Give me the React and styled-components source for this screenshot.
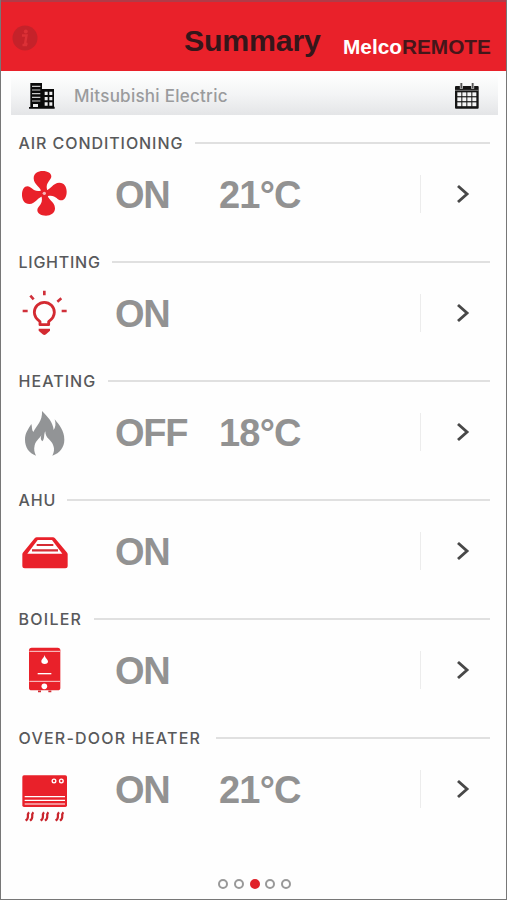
import React from 'react';
import styled, { createGlobalStyle } from 'styled-components';

const RED = '#e9212a';
const GREY = '#929292';

const FanIcon = () => (
	<Icon viewBox="0 0 150 168">
		{[0, 90, 180, 270].map((angle) => (
			<path
				key={angle}
				transform={`translate(73 82) rotate(${angle})`}
				fill={RED}
				d="M-10 0C-6-18-32-24-32-45C-32-60-19-67-5-67C11-67 21-60 21-51C21-38 3-34 8-11L9 0Z"
			/>
		))}
		<circle cx="73" cy="82" r="5" fill="#f7b5b8" />
	</Icon>
);

const BulbIcon = () => (
	<Icon viewBox="0 0 150 168">
		<path
			d="M60 119V110C50 103 43 95 43 82A30 30 0 0 1 103 82C103 95 96 103 86 110V119Z"
			fill="none"
			stroke="#d32a31"
			strokeWidth="8.5"
			strokeLinejoin="round"
		/>
		<path d="M56 131H90V137L78 148Q73 152 68 148L56 137Z" fill="#d32a31" />
		<path
			d="M73 17V31M31 32L41 43M112 50L124 40M8 78H23M125 78H140"
			stroke="#d0303a"
			strokeWidth="8"
		/>
	</Icon>
);

const FlameIcon = () => (
	<Icon viewBox="0 0 150 168">
		<path
			fill="#929496"
			d="M66 21C84 39 99 55 101 78C107 70 108 59 104 46C118 63 133 80 133 107C133 129 120 147 97 155C109 135 98 116 87 106C79 99 76 91 76 82C70 92 75 104 67 112C61 107 62 101 64 94C56 106 47 111 44 124C41 136 43 146 48 155C27 147 15 130 15 107C15 87 25 75 34 60C37 68 34 77 40 84C49 65 68 52 66 21Z"
		/>
	</Icon>
);

const AhuIcon = () => (
	<Icon viewBox="0 0 150 168">
		<path
			fill={RED}
			d="M50 43H99Q102 43 105 46L139 86Q143 90 143 94V130Q143 136 136 136H14Q7 136 7 130V94Q7 90 11 86L44 46Q47 43 50 43Z"
		/>
		<path fill="#fff" d="M53 51H96L127 92H22Z" />
		<path
			d="M50 66H100M36 82H114"
			stroke="#d52b33"
			strokeWidth="6.5"
		/>
	</Icon>
);

const BoilerIcon = () => (
	<Icon viewBox="0 0 150 168">
		<rect x="27" y="17" width="94" height="128" rx="8" fill={RED} />
		<path d="M28 28H120M28 118H120" stroke="#fbd3d4" strokeWidth="3" />
		<path d="M53 95H94" stroke="#fff" strokeWidth="4" />
		<path d="M74 38C74 47 84 52 84 58A10 8 0 0 1 64 58C64 51 73 47 74 38Z" fill="#fff" />
		<circle cx="73" cy="133" r="8.5" fill="#fff" />
		<path d="M54 148H63M85 148H94" stroke="#d32a31" strokeWidth="5" />
	</Icon>
);

const HeaterIcon = () => (
	<Icon viewBox="0 0 150 168">
		<rect x="7" y="43" width="134" height="95" rx="5" fill={RED} />
		<circle cx="102" cy="60" r="5.5" fill="none" stroke="#fff" strokeWidth="4" />
		<circle cx="124" cy="60" r="5.5" fill="none" stroke="#fff" strokeWidth="4" />
		<path d="M14 107H135M14 118H135M14 129H135" stroke="#fff" strokeWidth="3.5" />
		{[0, 45, 90].map((x) => (
			<path
				key={x}
				transform={`translate(${x} 0)`}
				d="M27 154C18 164 31 168 17 179M40 154C31 164 44 168 30 179"
				fill="none"
				stroke="#c9242c"
				strokeWidth="6.5"
			/>
		))}
	</Icon>
);

const BuildingIcon = () => (
	<svg width="26" height="26" viewBox="0 0 78 78">
		<path d="M4 0H39V18H75V71H77V77H0V72H4Z" fill="#0a0a0a" />
		<path
			d="M9 10H34M9 21H34M9 32H34M9 43H34M9 54H34"
			stroke="#c8c8c8"
			strokeWidth="3.5"
		/>
		<path d="M12 63H27V72H12Z" fill="#f0f0f0" />
		<path
			d="M47 26H56V36H47ZM61 26H70V36H61ZM47 42H56V52H47ZM61 42H70V52H61ZM47 58H56V68H47ZM61 58H70V68H61Z"
			fill="#eee"
		/>
	</svg>
);

const CalendarIcon = () => (
	<svg width="24" height="26" viewBox="0 0 72 78">
		<rect x="0" y="9" width="71" height="68" rx="3" fill="#151515" />
		<path d="M0 22H71" stroke="#888" strokeWidth="2.5" />
		<path d="M19 0V17M53 0V17" stroke="#ddd" strokeWidth="9" />
		<path d="M19 0V16M53 0V16" stroke="#555" strokeWidth="5" />
		{[28, 43, 58].map((y) =>
			[7, 22, 37, 52].map((x) => (
				<rect key={`${x}-${y}`} x={x} y={y} width="12" height="11.5" fill="#f4f4f4" />
			))
		)}
	</svg>
);

const InfoIcon = () => (
	<svg width="26" height="26" viewBox="0 0 26 26">
		<circle cx="13" cy="13" r="12.5" fill="#c5222a" />
		<circle cx="13.8" cy="6.5" r="2" fill="#dc3036" />
		<path
			d="M10 10.5H14.5L13 19H15.5M10.5 20H15"
			fill="none"
			stroke="#dc3036"
			strokeWidth="2.4"
		/>
	</svg>
);

const zones = [
	{ label: 'AIR CONDITIONING', spacing: 0.93, line: 195, state: 'ON', temp: '21°C', icon: <FanIcon /> },
	{ label: 'LIGHTING', spacing: 0.75, line: 112, state: 'ON', icon: <BulbIcon /> },
	{ label: 'HEATING', spacing: 1.05, line: 108, state: 'OFF', temp: '18°C', icon: <FlameIcon /> },
	{ label: 'AHU', spacing: 0.9, line: 67, state: 'ON', icon: <AhuIcon /> },
	{ label: 'BOILER', spacing: 1.25, line: 94, state: 'ON', icon: <BoilerIcon /> },
	{ label: 'OVER-DOOR HEATER', spacing: 1.22, line: 216, state: 'ON', temp: '21°C', icon: <HeaterIcon /> },
];

const ZoneCard = ({ zone }) => (
	<Zone>
		<ZoneHeader>
			<Label $line={zone.line} $spacing={zone.spacing}>
				{zone.label}
			</Label>
			<Line />
		</ZoneHeader>
		<ZoneBody>
			{zone.icon}
			<State>{zone.state}</State>
			<Temp>{zone.temp}</Temp>
			<Next>
				<svg width="14" height="20" viewBox="0 0 14 20">
					<path
						d="M2 2L11 10L2 18"
						fill="none"
						stroke="#484848"
						strokeWidth="2.9"
					/>
				</svg>
			</Next>
		</ZoneBody>
	</Zone>
);

export default function App() {
	return (
		<Screen>
			<GlobalStyle />
			<Header>
				<InfoIcon />
				<Title>Summary</Title>
				<Brand>
					Melco<BrandDark>REMOTE</BrandDark>
				</Brand>
			</Header>
			<SiteBar>
				<BuildingIcon />
				<SiteName>Mitsubishi Electric</SiteName>
				<CalendarIcon />
			</SiteBar>
			<Zones>
				{zones.map((zone) => (
					<ZoneCard key={zone.label} zone={zone} />
				))}
			</Zones>
			<Pager>
				{[0, 1, 2, 3, 4].map((page) => (
					<Dot key={page} $active={page === 2} />
				))}
			</Pager>
		</Screen>
	);
}

const GlobalStyle = createGlobalStyle`
	body {
		margin: 0;
		background: #fff;
	}
	svg {
		display: block;
		flex: none;
	}
`;

const Screen = styled.div`
	box-sizing: border-box;
	width: 507px;
	height: 900px;
	display: flex;
	flex-direction: column;
	background: #fefefe;
	border: 1px solid #777;
	border-width: 0 1px 1px;
	font-family: 'Liberation Sans', Arial, sans-serif;
	overflow: hidden;
`;

const Header = styled.header`
	box-sizing: border-box;
	height: 71px;
	flex: none;
	display: flex;
	align-items: flex-start;
	padding: 23px 0 0 11px;
	background: ${RED};
	border-top: 2px solid #b13b48;
`;

const Title = styled.h1`
	margin: -2px 0 0 146px;
	width: 159px;
	font-size: 30.3px;
	line-height: 36px;
	font-weight: bold;
	letter-spacing: -0.2px;
	color: #35161a;
	white-space: nowrap;
`;

const Brand = styled.div`
	margin-top: 10px;
	font-size: 20.8px;
	line-height: 24px;
	font-weight: bold;
	color: #fff;
	white-space: nowrap;
`;

const BrandDark = styled.span`
	color: #45161a;
`;

const SiteBar = styled.div`
	box-sizing: border-box;
	height: 40px;
	flex: none;
	display: flex;
	align-items: center;
	margin: 4px 8px 0 10px;
	padding: 2px 19px 0 18px;
	background: linear-gradient(#fefefe, #f3f4f5 50%, #e4e5e7);
`;

const SiteName = styled.div`
	flex: 1;
	padding-left: 19px;
	font-family: Inter, sans-serif;
	font-size: 17px;
	font-weight: 500;
	letter-spacing: 0.26px;
	color: #9a9b9d;
`;

const Zones = styled.main`
	padding-top: 18px;
	flex: none;
`;

const Zone = styled.section`
	height: 119.1px;
`;

const ZoneHeader = styled.div`
	height: 20px;
	display: flex;
	align-items: center;
	padding: 0 16px 0 17.5px;
`;

const Label = styled.h2`
	margin: 0;
	width: ${(props) => props.$line - 18.5}px;
	font-family: Inter, sans-serif;
	font-size: 16px;
	line-height: 20px;
	font-weight: 500;
	letter-spacing: ${(props) => props.$spacing}px;
	color: #58595b;
	white-space: nowrap;
`;

const Line = styled.div`
	flex: 1;
	height: 2px;
	background: #e0e0e0;
`;

const ZoneBody = styled.div`
	height: 82px;
	display: flex;
	align-items: center;
	padding-left: 19px;
`;

const Icon = styled.svg`
	width: 50px;
	height: 56px;
	overflow: visible;
`;

const State = styled.div`
	width: 104px;
	padding: 2px 0 0 45px;
	font-size: 38px;
	line-height: 44px;
	font-weight: bold;
	letter-spacing: -1.2px;
	color: ${GREY};
`;

const Temp = styled(State)`
	width: 201px;
	padding-left: 0;
	letter-spacing: -0.8px;
`;

const Next = styled.div`
	height: 38px;
	display: flex;
	align-items: center;
	padding-left: 35px;
	border-left: 1px solid #ececec;
`;

const Pager = styled.div`
	display: flex;
	justify-content: center;
	gap: 5.8px;
	margin-top: 31px;
	padding-left: 2px;
`;

const Dot = styled.span`
	box-sizing: border-box;
	width: 10px;
	height: 10px;
	border-radius: 50%;
	border: 2px solid ${(props) => (props.$active ? '#e0222a' : '#999')};
	background: ${(props) => (props.$active ? '#e0222a' : '#fff')};
`;
